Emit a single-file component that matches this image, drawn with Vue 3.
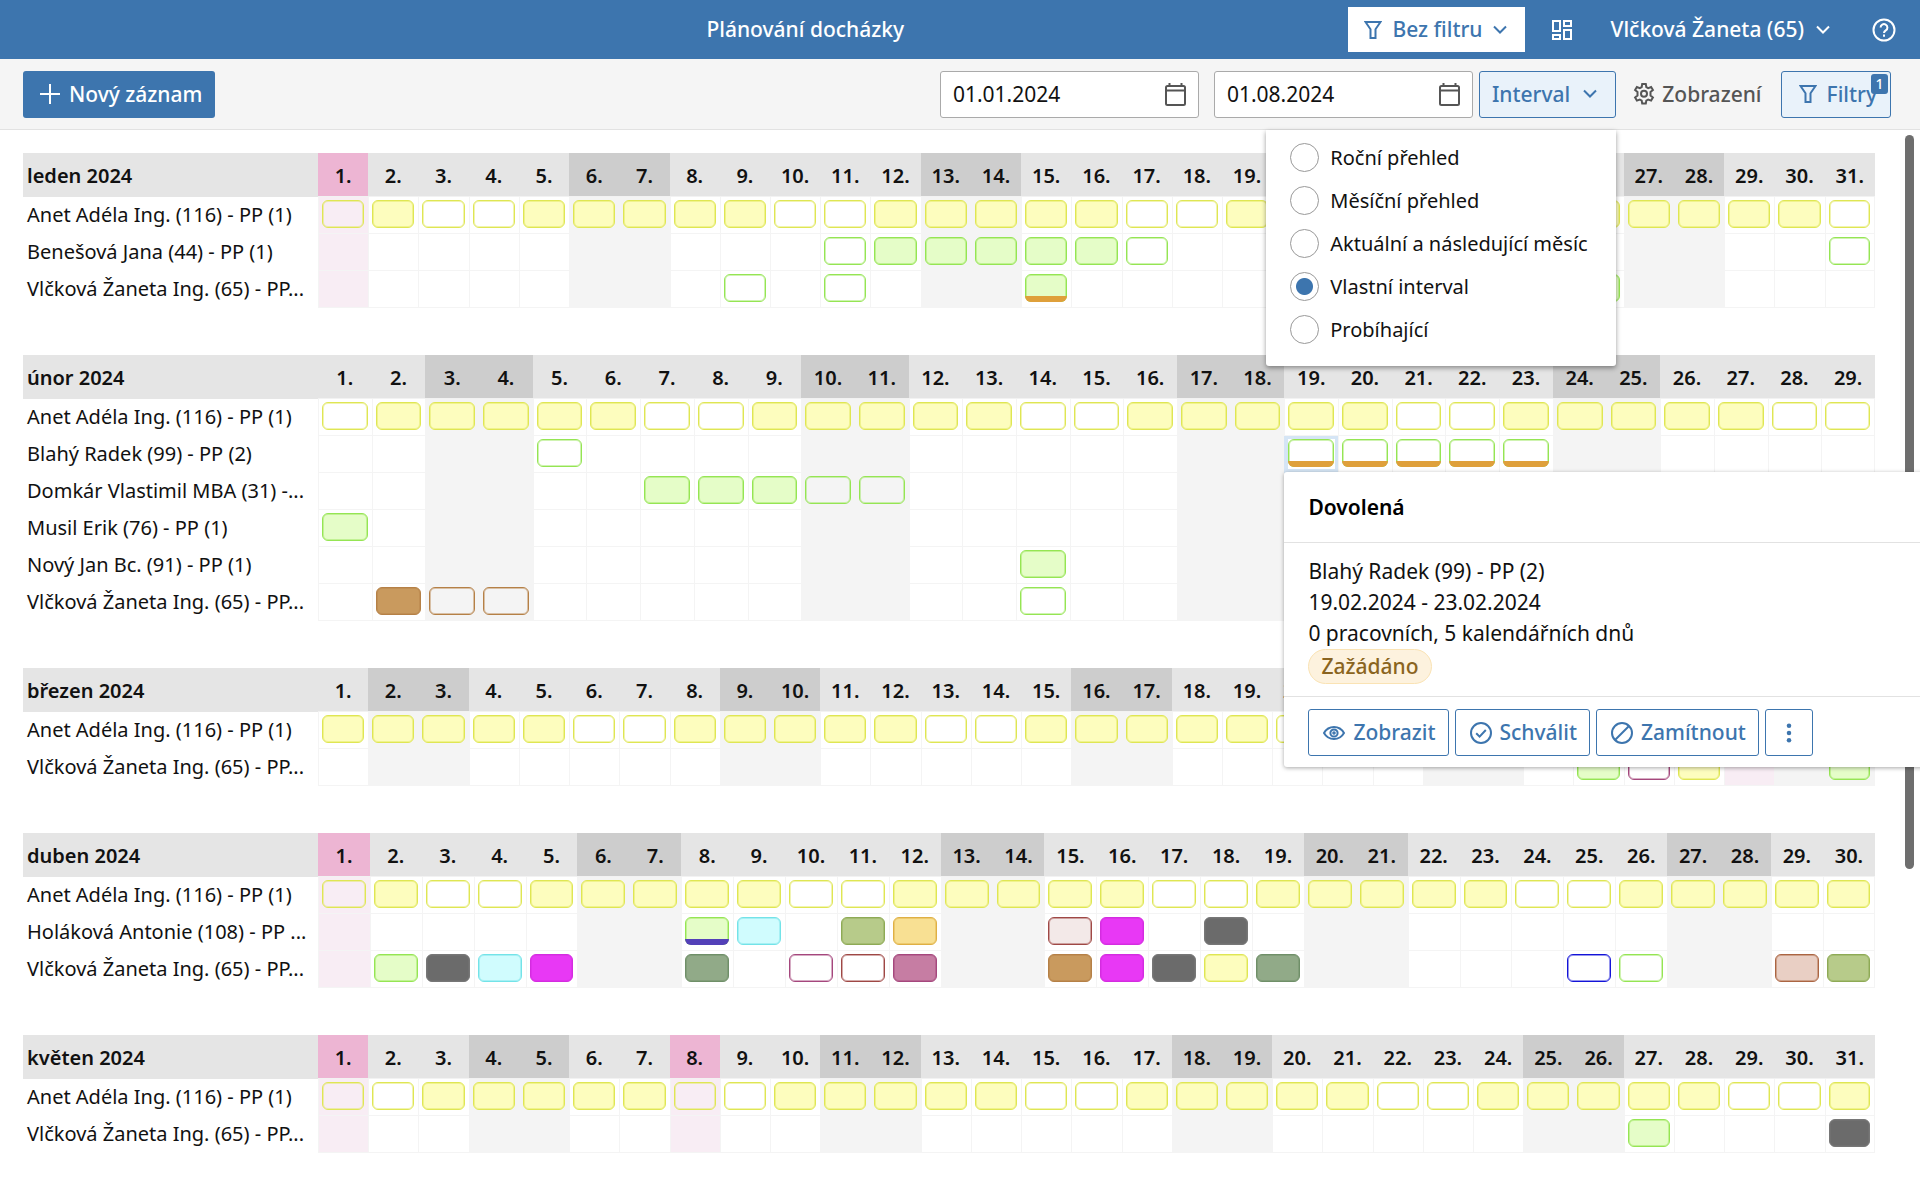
<script setup>
import { ref } from 'vue'

const YEAR = 2024
const HOLIDAYS = ['1-1', '3-29', '4-1', '5-1', '5-8']

const dateFrom = ref('01.01.2024')
const dateTo = ref('01.08.2024')
const interval = ref('custom')

const intervals = [
  { value: 'year', label: 'Roční přehled' },
  { value: 'month', label: 'Měsíční přehled' },
  { value: 'current', label: 'Aktuální a následující měsíc' },
  { value: 'custom', label: 'Vlastní interval' },
  { value: 'running', label: 'Probíhající' },
]

const VLCKOVA = 'Vlčková Žaneta Ing. (65) - PP...'

const months = [
  {
    number: 1,
    name: 'leden 2024',
    people: [
      {
        name: 'Benešová Jana (44) - PP (1)',
        days: {
          11: 'green open', 12: 'green', 13: 'green', 14: 'green', 15: 'green',
          16: 'green', 17: 'green open', 31: 'green open',
        },
      },
      {
        name: VLCKOVA,
        days: { 9: 'green open', 11: 'green open', 15: 'green requested', 26: 'green' },
      },
    ],
  },
  {
    number: 2,
    name: 'únor 2024',
    people: [
      {
        name: 'Blahý Radek (99) - PP (2)',
        selected: 19,
        days: {
          5: 'green open', 19: 'green open requested', 20: 'green open requested',
          21: 'green open requested', 22: 'green open requested', 23: 'green open requested',
        },
      },
      {
        name: 'Domkár Vlastimil MBA (31) -...',
        days: { 7: 'green', 8: 'green', 9: 'green', 10: 'green open', 11: 'green open' },
      },
      { name: 'Musil Erik (76) - PP (1)', days: { 1: 'green' } },
      { name: 'Nový Jan Bc. (91) - PP (1)', days: { 14: 'green' } },
      {
        name: VLCKOVA,
        days: { 2: 'brown', 3: 'brown open', 4: 'brown open', 14: 'green open' },
      },
    ],
  },
  {
    number: 3,
    name: 'březen 2024',
    people: [
      {
        name: VLCKOVA,
        days: { 26: 'green', 27: 'mauve open', 28: 'yellow', 31: 'green' },
      },
    ],
  },
  {
    number: 4,
    name: 'duben 2024',
    people: [
      {
        name: 'Holáková Antonie (108) - PP ...',
        days: {
          8: 'green planned', 9: 'cyan', 11: 'olive', 12: 'amber',
          15: 'red', 16: 'magenta', 18: 'dark',
        },
      },
      {
        name: VLCKOVA,
        days: {
          2: 'green', 3: 'dark', 4: 'cyan', 5: 'magenta', 8: 'sage',
          10: 'mauve open', 11: 'red open', 12: 'mauve', 15: 'brown',
          16: 'magenta', 17: 'dark', 18: 'yellow', 19: 'sage',
          25: 'blue open', 26: 'green open', 29: 'peach', 30: 'olive',
        },
      },
    ],
  },
  {
    number: 5,
    name: 'květen 2024',
    people: [{ name: VLCKOVA, days: { 27: 'green', 31: 'dark' } }],
  },
].map((month) => {
  const count = new Date(YEAR, month.number, 0).getDate()
  const days = Array.from({ length: count }, (_, i) => {
    const day = i + 1
    const weekday = new Date(YEAR, month.number - 1, day).getDay()
    const holiday = HOLIDAYS.includes(`${month.number}-${day}`)
    return { day, weekday, kind: holiday ? 'holiday' : weekday % 6 === 0 ? 'weekend' : '' }
  })
  // Shift roster: Wednesdays, Thursdays and public holidays are free.
  const shifts = {}
  for (const d of days) {
    const free = d.kind === 'holiday' || d.weekday === 3 || d.weekday === 4
    shifts[d.day] = free ? 'yellow open' : 'yellow'
  }
  return {
    ...month,
    days,
    people: [{ name: 'Anet Adéla Ing. (116) - PP (1)', days: shifts }, ...month.people],
  }
})
</script>

<template>
  <div class="page">
    <header class="topbar">
      <h1>Plánování docházky</h1>
      <button type="button" class="filter-select">
        <svg class="funnel" viewBox="0 0 18 18"><path d="M1.500 1h15l-5 7.300V17h-5V8.300z" /></svg>
        Bez filtru
        <svg class="chevron" viewBox="0 0 14 10"><path d="M1 1.500l6 6 6-6" /></svg>
      </button>
      <button type="button" class="bare apps" aria-label="Aplikace">
        <svg class="grid-icon" viewBox="0 0 20 20">
          <path d="M1 1h7v10H1zM12 1h7v5h-7zM12 10h7v9h-7zM1 15h7v4H1z" />
        </svg>
      </button>
      <button type="button" class="bare user">
        Vlčková Žaneta (65)
        <svg class="chevron" viewBox="0 0 14 10"><path d="M1 1.500l6 6 6-6" /></svg>
      </button>
      <button type="button" class="bare help" aria-label="Nápověda">
        <svg class="help-icon" viewBox="0 0 24 24">
          <circle cx="12" cy="12" r="10.500" />
          <path d="M8.600 9.500a3.400 3.400 0 1 1 5.200 2.900c-1.200.8-1.800 1.300-1.800 2.600" />
          <path d="M12 16.500v2.200" />
        </svg>
      </button>
    </header>

    <div class="toolbar">
      <button type="button" class="primary">
        <svg class="plus" viewBox="0 0 20 20"><path d="M10 0v20M0 10h20" /></svg>
        Nový záznam
      </button>
      <div class="dates">
        <div class="date">
          <input v-model="dateFrom" type="text" aria-label="Datum od" />
          <svg class="calendar" viewBox="0 0 21 23">
            <rect x="1" y="3" width="19" height="19" rx="1.500" />
            <path d="M1 7.500h19M4.500 0v3M16.500 0v3" />
          </svg>
        </div>
        <div class="date">
          <input v-model="dateTo" type="text" aria-label="Datum do" />
          <svg class="calendar" viewBox="0 0 21 23">
            <rect x="1" y="3" width="19" height="19" rx="1.500" />
            <path d="M1 7.500h19M4.500 0v3M16.500 0v3" />
          </svg>
        </div>
      </div>
      <div class="interval">
        <button type="button" class="soft">
          Interval
          <svg class="chevron" viewBox="0 0 14 10"><path d="M1 1.500l6 6 6-6" /></svg>
        </button>
        <div class="menu">
          <label v-for="item in intervals" :key="item.value">
            <input v-model="interval" type="radio" name="interval" :value="item.value" />
            {{ item.label }}
          </label>
        </div>
      </div>
      <button type="button" class="display">
        <svg class="gear" viewBox="0 0 22 22">
          <path d="M9.200 1h3.600l.5 3 1.900 1.100 2.900-1.100 1.800 3.100-2.400 1.900v3.600l2.400 1.900-1.800 3.100-2.900-1.100-1.900 1.100-.5 3H9.200l-.5-3-1.900-1.100-2.900 1.100-1.800-3.100 2.400-1.900V9L2.100 7.100 3.900 4l2.900 1.100L8.700 4z" />
          <circle cx="11" cy="10.800" r="3" />
        </svg>
        Zobrazení
      </button>
      <button type="button" class="soft filters">
        <svg class="funnel" viewBox="0 0 18 18"><path d="M1.500 1h15l-5 7.300V17h-5V8.300z" /></svg>
        Filtry
        <span class="count">1</span>
      </button>
    </div>

    <main>
      <div class="scrollbar"></div>
      <table v-for="month in months" :key="month.number">
        <colgroup>
          <col class="name-col" />
          <col v-for="d in month.days" :key="d.day" />
        </colgroup>
        <thead>
          <tr>
            <th scope="col" class="name">{{ month.name }}</th>
            <th v-for="d in month.days" :key="d.day" scope="col" :class="d.kind">{{ d.day }}.</th>
          </tr>
        </thead>
        <tbody>
          <tr v-for="person in month.people" :key="person.name">
            <th scope="row" class="name">{{ person.name }}</th>
            <td
              v-for="d in month.days"
              :key="d.day"
              :class="[d.kind, { selected: person.selected === d.day }]"
            >
              <div v-if="person.days[d.day]" class="pill" :class="person.days[d.day]"></div>
              <section v-if="person.selected === d.day" class="detail">
                <h2>Dovolená</h2>
                <div class="detail-body">
                  <p>Blahý Radek (99) - PP (2)</p>
                  <p>19.02.2024 - 23.02.2024</p>
                  <p>0 pracovních, 5 kalendářních dnů</p>
                  <span class="state">Zažádáno</span>
                </div>
                <div class="detail-actions">
                  <button type="button">
                    <svg class="action-icon" viewBox="0 0 22 22">
                      <path d="M1 11c2.200-3.800 5.800-6 10-6s7.800 2.200 10 6c-2.200 3.800-5.800 6-10 6s-7.800-2.200-10-6z" />
                      <circle cx="11" cy="11" r="3.600" /><circle cx="11" cy="11" r=".8" />
                    </svg>
                    Zobrazit
                  </button>
                  <button type="button">
                    <svg class="action-icon" viewBox="0 0 22 22">
                      <circle cx="11" cy="11" r="10" /><path d="M6.200 11.200l3.400 3.400 6.200-6.600" />
                    </svg>
                    Schválit
                  </button>
                  <button type="button">
                    <svg class="action-icon" viewBox="0 0 22 22">
                      <circle cx="11" cy="11" r="10" /><path d="M4 18L18 4" />
                    </svg>
                    Zamítnout
                  </button>
                  <button type="button" class="more" aria-label="Další akce">
                    <svg viewBox="0 0 6 22">
                      <circle cx="3" cy="3" r="2.500" /><circle cx="3" cy="11" r="2.500" /><circle cx="3" cy="19" r="2.500" />
                    </svg>
                  </button>
                </div>
              </section>
            </td>
          </tr>
        </tbody>
      </table>
    </main>
  </div>
</template>

<style>
body {
  background: #fff;
}
</style>

<style scoped>
.page {
  min-height: 100vh;
  overflow: hidden;
  color: #111;
  font-family: "Noto Sans", "Open Sans", sans-serif;
  font-size: 21px;
  line-height: 31px;
}

*,
*::after {
  box-sizing: border-box;
}

button,
input {
  margin: 0;
  font: inherit;
  color: inherit;
}

button {
  display: flex;
  align-items: center;
  padding: 0;
  border: 1px solid transparent;
  background: none;
  font-weight: 500;
  white-space: nowrap;
  cursor: pointer;
}

svg {
  flex: none;
  fill: none;
  stroke: currentColor;
  stroke-width: 2;
}

.chevron {
  width: 14px;
  height: 10px;
}

.funnel {
  width: 18px;
  height: 18px;
}

/* Top bar */
.topbar {
  display: flex;
  align-items: center;
  height: 59px;
  padding-right: 23px;
  background: #3d75ae;
  color: #fff;
}

h1 {
  flex: 1;
  margin: 0;
  padding-left: 263px;
  font-size: 21px;
  font-weight: 500;
  text-align: center;
}

.filter-select {
  gap: 11px;
  height: 45px;
  padding: 0 17px 0 15px;
  background: #fff;
  color: #3d75ae;
}

.bare {
  gap: 12px;
}

.apps {
  margin-left: 26px;
}

.grid-icon {
  width: 20px;
  height: 20px;
}

.user {
  margin-left: 36px;
}

.help {
  margin-left: 40px;
}

.help-icon {
  width: 24px;
  height: 24px;
}

/* Toolbar */
.toolbar {
  display: flex;
  align-items: center;
  height: 71px;
  padding: 0 29px 0 23px;
  border-bottom: 1px solid #e2e2e2;
  background: #f5f5f5;
}

.primary,
.soft,
.display {
  height: 47px;
  border-radius: 3px;
}

.primary {
  gap: 9px;
  margin-right: auto;
  padding: 0 12px 0 16px;
  background: #3d75ae;
  color: #fff;
}

.plus {
  width: 20px;
  height: 20px;
}

.dates {
  display: flex;
  gap: 15px;
  margin-right: 6px;
}

.date {
  display: flex;
  align-items: center;
  width: 259px;
  height: 47px;
  padding: 0 12px;
  border: 1px solid #aaa;
  border-radius: 3px;
  background: #fff;
}

.date input {
  flex: 1;
  min-width: 0;
  padding: 0;
  border: 0;
  outline: 0;
  background: none;
}

.calendar {
  width: 21px;
  height: 23px;
  color: #555;
}

.interval {
  position: relative;
}

.soft {
  gap: 13px;
  padding: 0 18px 0 12px;
  border-color: #3d75ae;
  background: #e9f2fa;
  color: #3d75ae;
}

.display {
  gap: 7px;
  padding: 0 18px 0 16px;
  color: #555;
}

.gear {
  width: 22px;
  height: 22px;
}

.filters {
  position: relative;
  gap: 10px;
  padding: 0 13px 0 17px;
}

.count {
  position: absolute;
  top: 2px;
  right: 2px;
  width: 17px;
  height: 20px;
  border-radius: 3px;
  background: #3d75ae;
  color: #fff;
  font-size: 14px;
  line-height: 19px;
  text-align: center;
}

.menu {
  position: absolute;
  z-index: 2;
  top: calc(100% + 12px);
  right: 0;
  display: flex;
  flex-direction: column;
  gap: 14px;
  min-width: 350px;
  padding: 13px 16px 22px 24px;
  border-radius: 0 0 3px 3px;
  background: #fff;
  box-shadow: 0 2px 5px rgba(0, 0, 0, 0.4);
  font-size: 20px;
  white-space: nowrap;
}

.menu label {
  display: flex;
  align-items: center;
  gap: 11px;
  height: 29px;
}

.menu input {
  flex: none;
  width: 29px;
  height: 29px;
  border: 1px solid #999;
  border-radius: 50%;
  appearance: none;
  background: #fff;
}

.menu input:checked {
  background: radial-gradient(circle, #3d75ae 8px, #fff 9px);
}

/* Calendar */
main {
  position: relative;
  display: flex;
  flex-direction: column;
  gap: 47px;
  padding: 23px 45px 36px 23px;
}

.scrollbar {
  position: absolute;
  top: 5px;
  right: 6px;
  width: 9px;
  height: 734px;
  border-radius: 5px;
  background: #6e6e6e;
}

table {
  width: 100%;
  border-spacing: 0;
  font-size: 20px;
  table-layout: fixed;
}

.name-col {
  width: 295px;
}

th,
td {
  padding: 0;
}

thead th {
  height: 44px;
  padding-top: 1px;
  border-bottom: 1px solid #f2f2f2;
  background: #e5e5e5;
  font-weight: 600;
}

thead th.weekend {
  background: #cdcdcd;
}

thead th.holiday {
  background: #edb5d3;
}

.name {
  padding-left: 4px;
  overflow: hidden;
  text-align: left;
  white-space: nowrap;
}

thead .name {
  border-bottom-color: #e5e5e5;
}

tbody .name {
  padding-bottom: 2px;
  font-weight: 400;
}

td {
  height: 37px;
  padding: 3px 4px 5px 3px;
  border-bottom: 1px solid #f4f4f4;
  border-left: 1px solid #f4f4f4;
  vertical-align: top;
}

td:last-child {
  border-right: 1px solid #f4f4f4;
}

td.weekend {
  background: #f4f4f4;
}

td.holiday {
  background: #f8edf4;
}

td.selected {
  position: relative;
  z-index: 1;
  border-color: #d5e5f5;
  box-shadow: inset 0 0 0 3px #d5e5f5;
}

.pill {
  --fill: #e5fdc8;
  --edge: #95e553;
  position: relative;
  height: 28px;
  border: 1px solid var(--edge);
  border-radius: 6px;
  background: var(--fill);
  box-shadow: inset 0 0 0 1px color-mix(in srgb, var(--edge) 45%, transparent);
}

.pill.open {
  background: transparent;
}

.selected .pill {
  background: #fff;
}

.requested::after,
.planned::after {
  content: "";
  position: absolute;
  right: -1px;
  bottom: -1px;
  left: -1px;
  height: 6px;
  border-radius: 0 0 6px 6px;
  background: #dfa03b;
}

.planned::after {
  background: #5340b8;
}

.yellow {
  --fill: #fdfdbe;
  --edge: #dfe653;
}

.brown {
  --fill: #c99a5e;
  --edge: #b58046;
}

.mauve {
  --fill: #c67da3;
  --edge: #a5477d;
}

.red {
  --fill: #f3e9e8;
  --edge: #9f4845;
}

.cyan {
  --fill: #d0fcfe;
  --edge: #73e3e8;
}

.olive {
  --fill: #b7cb8a;
  --edge: #8eaa55;
}

.amber {
  --fill: #f8e093;
  --edge: #dfb044;
}

.magenta {
  --fill: #e838f5;
  --edge: #d42ce0;
}

.dark {
  --fill: #6b6b6b;
  --edge: #777;
}

.sage {
  --fill: #91aa88;
  --edge: #6f8f68;
}

.blue {
  --edge: #1414d8;
}

.peach {
  --fill: #e9cfc4;
  --edge: #ab6542;
}

/* Record detail */
.detail {
  position: absolute;
  z-index: 1;
  top: 100%;
  left: -1px;
  width: 660px;
  border-radius: 3px;
  background: #fff;
  box-shadow: 0 1px 4px rgba(0, 0, 0, 0.35);
  font-size: 21px;
}

h2 {
  margin: 0;
  padding: 20px 24px 19px;
  border-bottom: 1px solid #e2e2e2;
  font-size: 21px;
  font-weight: 600;
  color: #000;
}

.detail-body {
  padding: 13px 24px 12px;
  border-bottom: 1px solid #e2e2e2;
}

.detail-body p {
  margin: 0;
}

.state {
  display: block;
  width: fit-content;
  padding: 1px 12px;
  border: 1px solid #fae3b4;
  border-radius: 18px;
  background: #fdf2de;
  color: #8a6420;
  font-weight: 500;
}

.detail-actions {
  display: flex;
  gap: 6px;
  padding: 12px 24px 11px;
}

.detail-actions button {
  gap: 8px;
  height: 47px;
  padding: 0 12px 0 14px;
  border-color: #3d75ae;
  border-radius: 3px;
  color: #3d75ae;
}

.action-icon {
  width: 22px;
  height: 22px;
}

.detail-actions .more {
  padding: 0 20px;
}

.more svg {
  width: 6px;
  height: 20px;
  fill: currentColor;
  stroke: none;
}
</style>
